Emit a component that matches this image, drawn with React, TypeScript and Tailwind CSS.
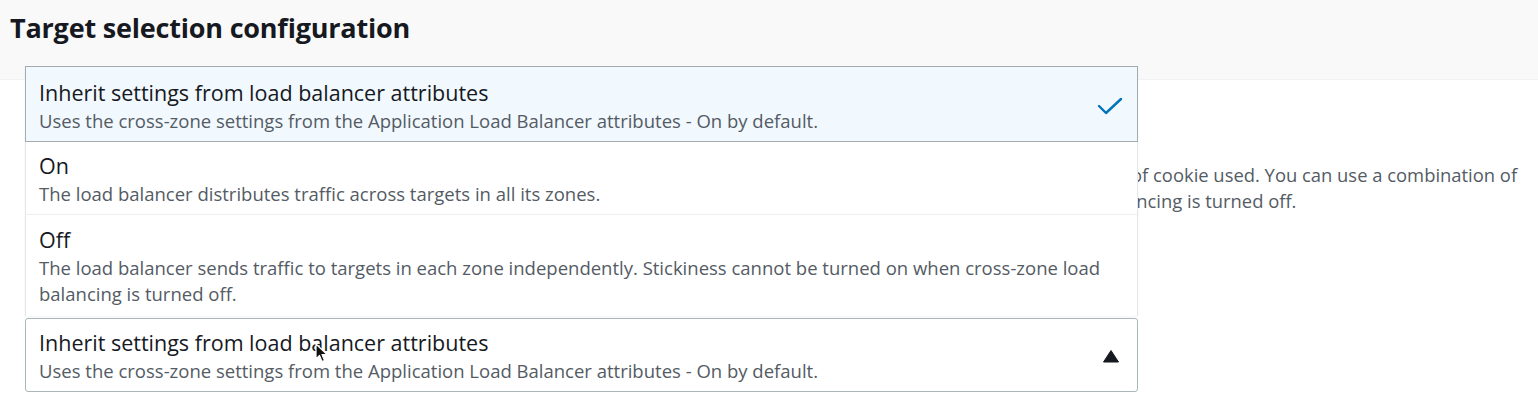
import React from "react";

function Check() {
  return (
    <svg width="26" height="18" viewBox="0 0 26 18" fill="none">
      <path d="M2 9 L9 16 L24 2" stroke="#0073bb" strokeWidth="2.4" strokeLinecap="round" strokeLinejoin="round" />
    </svg>
  );
}

function Caret() {
  return (
    <svg width="18" height="14" viewBox="0 0 18 14">
      <path d="M9 1.5 L16.5 13 L1.5 13 Z" fill="#16191f" stroke="#16191f" strokeWidth="1" strokeLinejoin="round" />
    </svg>
  );
}

function Cursor() {
  return (
    <svg width="14" height="20" viewBox="0 0 14 20">
      <path d="M1 1 L1 16 L4.5 12.5 L7 18.5 L9.5 17.5 L7 11.5 L12 11.5 Z" fill="#111" stroke="#fff" strokeWidth="1.2" strokeLinejoin="round" />
    </svg>
  );
}

export default function App() {
  return (
    <div
      className="w-[1538px] h-[411px] bg-white overflow-hidden text-[#16191f]"
      style={{ fontFamily: '"Open Sans", "Noto Sans", Arial, sans-serif' }}
    >
      <div className="h-[80px] bg-[#f9f9f9] border-b border-[#f2f2f2] pl-[10px] pt-[10px]">
        <h2 className="text-[27px] leading-[36px] font-bold tracking-[-0.2px]">Target selection configuration</h2>
      </div>
      <div className="relative">
        <div className="pl-[1131px] pt-[82px] text-[18.4px] leading-[26px] text-[#545b64] whitespace-nowrap">
          <div>of cookie used. You can use a combination of</div>
          <div className="-ml-[5px]">ancing is turned off.</div>
        </div>
        <div className="relative ml-[25px] mt-[104px] w-[1113px]">
          <div className="absolute left-0 bottom-[calc(100%+2px)] w-full bg-white border-x border-[#e4e7e8] shadow-[0_1px_2px_rgba(0,0,0,0.05)]">
            <div className="-mx-px flex items-center justify-between bg-[#f1f8fe] border border-[#a3adb0] pl-[13px] pr-[14px] pt-[11px] pb-[7px]">
              <div>
                <div className="text-[21.5px] leading-[30px]">Inherit settings from load balancer attributes</div>
                <div className="text-[18.5px] leading-[26px] text-[#545b64]">
                  Uses the cross-zone settings from the Application Load Balancer attributes - On by default.
                </div>
              </div>
              <Check />
            </div>
            <div className="border-b border-[#eef0f0] pl-[13px] pr-[14px] pt-[9px] pb-[7px]">
              <div className="text-[21.5px] leading-[30px]">On</div>
              <div className="text-[18.5px] leading-[26px] text-[#545b64]">
                The load balancer distributes traffic across targets in all its zones.
              </div>
            </div>
            <div className="pl-[13px] pr-[14px] pt-[10px] pb-[9px]">
              <div className="text-[21.5px] leading-[30px]">Off</div>
              <div className="text-[18.5px] leading-[26px] text-[#545b64]">
                The load balancer sends traffic to targets in each zone independently. Stickiness cannot be turned on when cross-zone load balancing is turned off.
              </div>
            </div>
          </div>
          <div className="relative flex items-center justify-between border border-[#aab7b8] rounded-[3px] bg-white pl-[13px] pr-[17px] pt-[9px] pb-[7px]">
            <div>
              <div className="text-[21.5px] leading-[30px]">Inherit settings from load balancer attributes</div>
              <div className="text-[18.5px] leading-[26px] text-[#545b64]">
                Uses the cross-zone settings from the Application Load Balancer attributes - On by default.
              </div>
            </div>
            <Caret />
            <div className="absolute left-[289px] top-[24px]">
              <Cursor />
            </div>
          </div>
        </div>
      </div>
    </div>
  );
}
